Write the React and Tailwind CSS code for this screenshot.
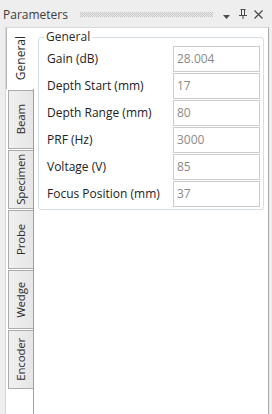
import * as React from 'react'

const FONT = { fontFamily: '"Segoe UI", "Open Sans", "Noto Sans", sans-serif' }

const TABS = ['General', 'Beam', 'Specimen', 'Probe', 'Wedge', 'Encoder']

const ROWS = [
  ['Gain (dB)', '28.004'],
  ['Depth Start (mm)', '17'],
  ['Depth Range (mm)', '80'],
  ['PRF (Hz)', '3000'],
  ['Voltage (V)', '85'],
  ['Focus Position (mm)', '37'],
]

function Grip() {
  return (
    <svg width="133" height="5" className="block">
      <defs>
        <pattern id="grip" width="2" height="2" patternUnits="userSpaceOnUse">
          <rect x="0" y="0" width="1" height="1" fill="#c4c4c4" />
          <rect x="1" y="1" width="1" height="1" fill="#c4c4c4" />
        </pattern>
      </defs>
      <rect width="133" height="5" fill="url(#grip)" />
    </svg>
  )
}

function TitleBar() {
  return (
    <div className="h-[27px] flex items-center pl-[3px] pr-[9px] shrink-0">
      <div className="text-[12px] text-[#3c3c3c] leading-none mt-[2px]">Parameters</div>
      <div className="ml-[12px] mt-[2px]"><Grip /></div>
      <div className="flex-1" />
      {/* dropdown */}
      <svg width="8" height="4" className="mt-[6px] mr-[8px]">
        <path d="M0 0 H7 L3.5 4 Z" fill="#4a4a4a" />
      </svg>
      {/* pin */}
      <svg width="8" height="10" className="mt-[1px] mr-[7px]">
        <path d="M1.5 0.5 H6.5 M2.5 0.5 V6 M5.5 0.5 V6 M0 6.5 H8 M4 6.5 V10" stroke="#4a4a4a" strokeWidth="1" fill="none" />
      </svg>
      {/* close */}
      <svg width="9" height="9" className="mt-[1px]">
        <path d="M0.5 0.5 L8.5 8.5 M8.5 0.5 L0.5 8.5" stroke="#4a4a4a" strokeWidth="1.2" fill="none" />
      </svg>
    </div>
  )
}

function Tab({ label, active }) {
  if (active) {
    return (
      <div className="h-[61px] mr-[-1px] bg-white border-l border-[#b4b4b4] relative z-10 flex items-center justify-center">
        <span className="[writing-mode:vertical-rl] rotate-180 text-[12px] text-[#2b2b2b] leading-none">{label}</span>
      </div>
    )
  }
  return (
    <div className="h-[59px] mt-[1px] ml-[2px] border border-r-0 border-[#acacac] bg-gradient-to-r from-[#f0f0f0] to-[#e6e6e6] flex items-center justify-center">
      <span className="[writing-mode:vertical-rl] rotate-180 text-[11.5px] tracking-[-0.2px] text-[#2b2b2b] leading-none">{label}</span>
    </div>
  )
}

export default function App() {
  return (
    <div className="w-[272px] h-[414px] bg-[#eeeeee] flex flex-col overflow-hidden" style={FONT}>
      <TitleBar />
      <div className="flex-1 flex ml-[5px] mr-[3px] border-t border-[#d8d8d8] border-l border-r border-r-[#a8a8a8] bg-white">
        <div className="w-[28px] border-r border-[#a0a0a0] flex flex-col">
          {TABS.map((t, i) => <Tab key={t} label={t} active={i === 0} />)}
        </div>
        <div className="flex-1 pt-[9px] pl-[4px] pr-[4px]">
          <div className="relative border border-[#d5dfe5] rounded-[3px] pl-[8px] pr-[3px] pt-[8px] pb-[2px]">
            <div className="absolute left-[5px] top-[-8px] bg-white px-[2px] text-[12px] leading-[14px] text-[#2b2b2b]">General</div>
            <div className="flex flex-col gap-[1px]">
              {ROWS.map(([label, value]) => (
                <div key={label} className="flex items-center h-[26px]">
                  <div className="flex-1 text-[12px] text-[#222222]">{label}</div>
                  <div className="w-[87px] h-[26px] border border-[#cccccc] flex items-center pl-[3px] text-[12px] text-[#8a8a8a]">{value}</div>
                </div>
              ))}
            </div>
          </div>
        </div>
      </div>
    </div>
  )
}
